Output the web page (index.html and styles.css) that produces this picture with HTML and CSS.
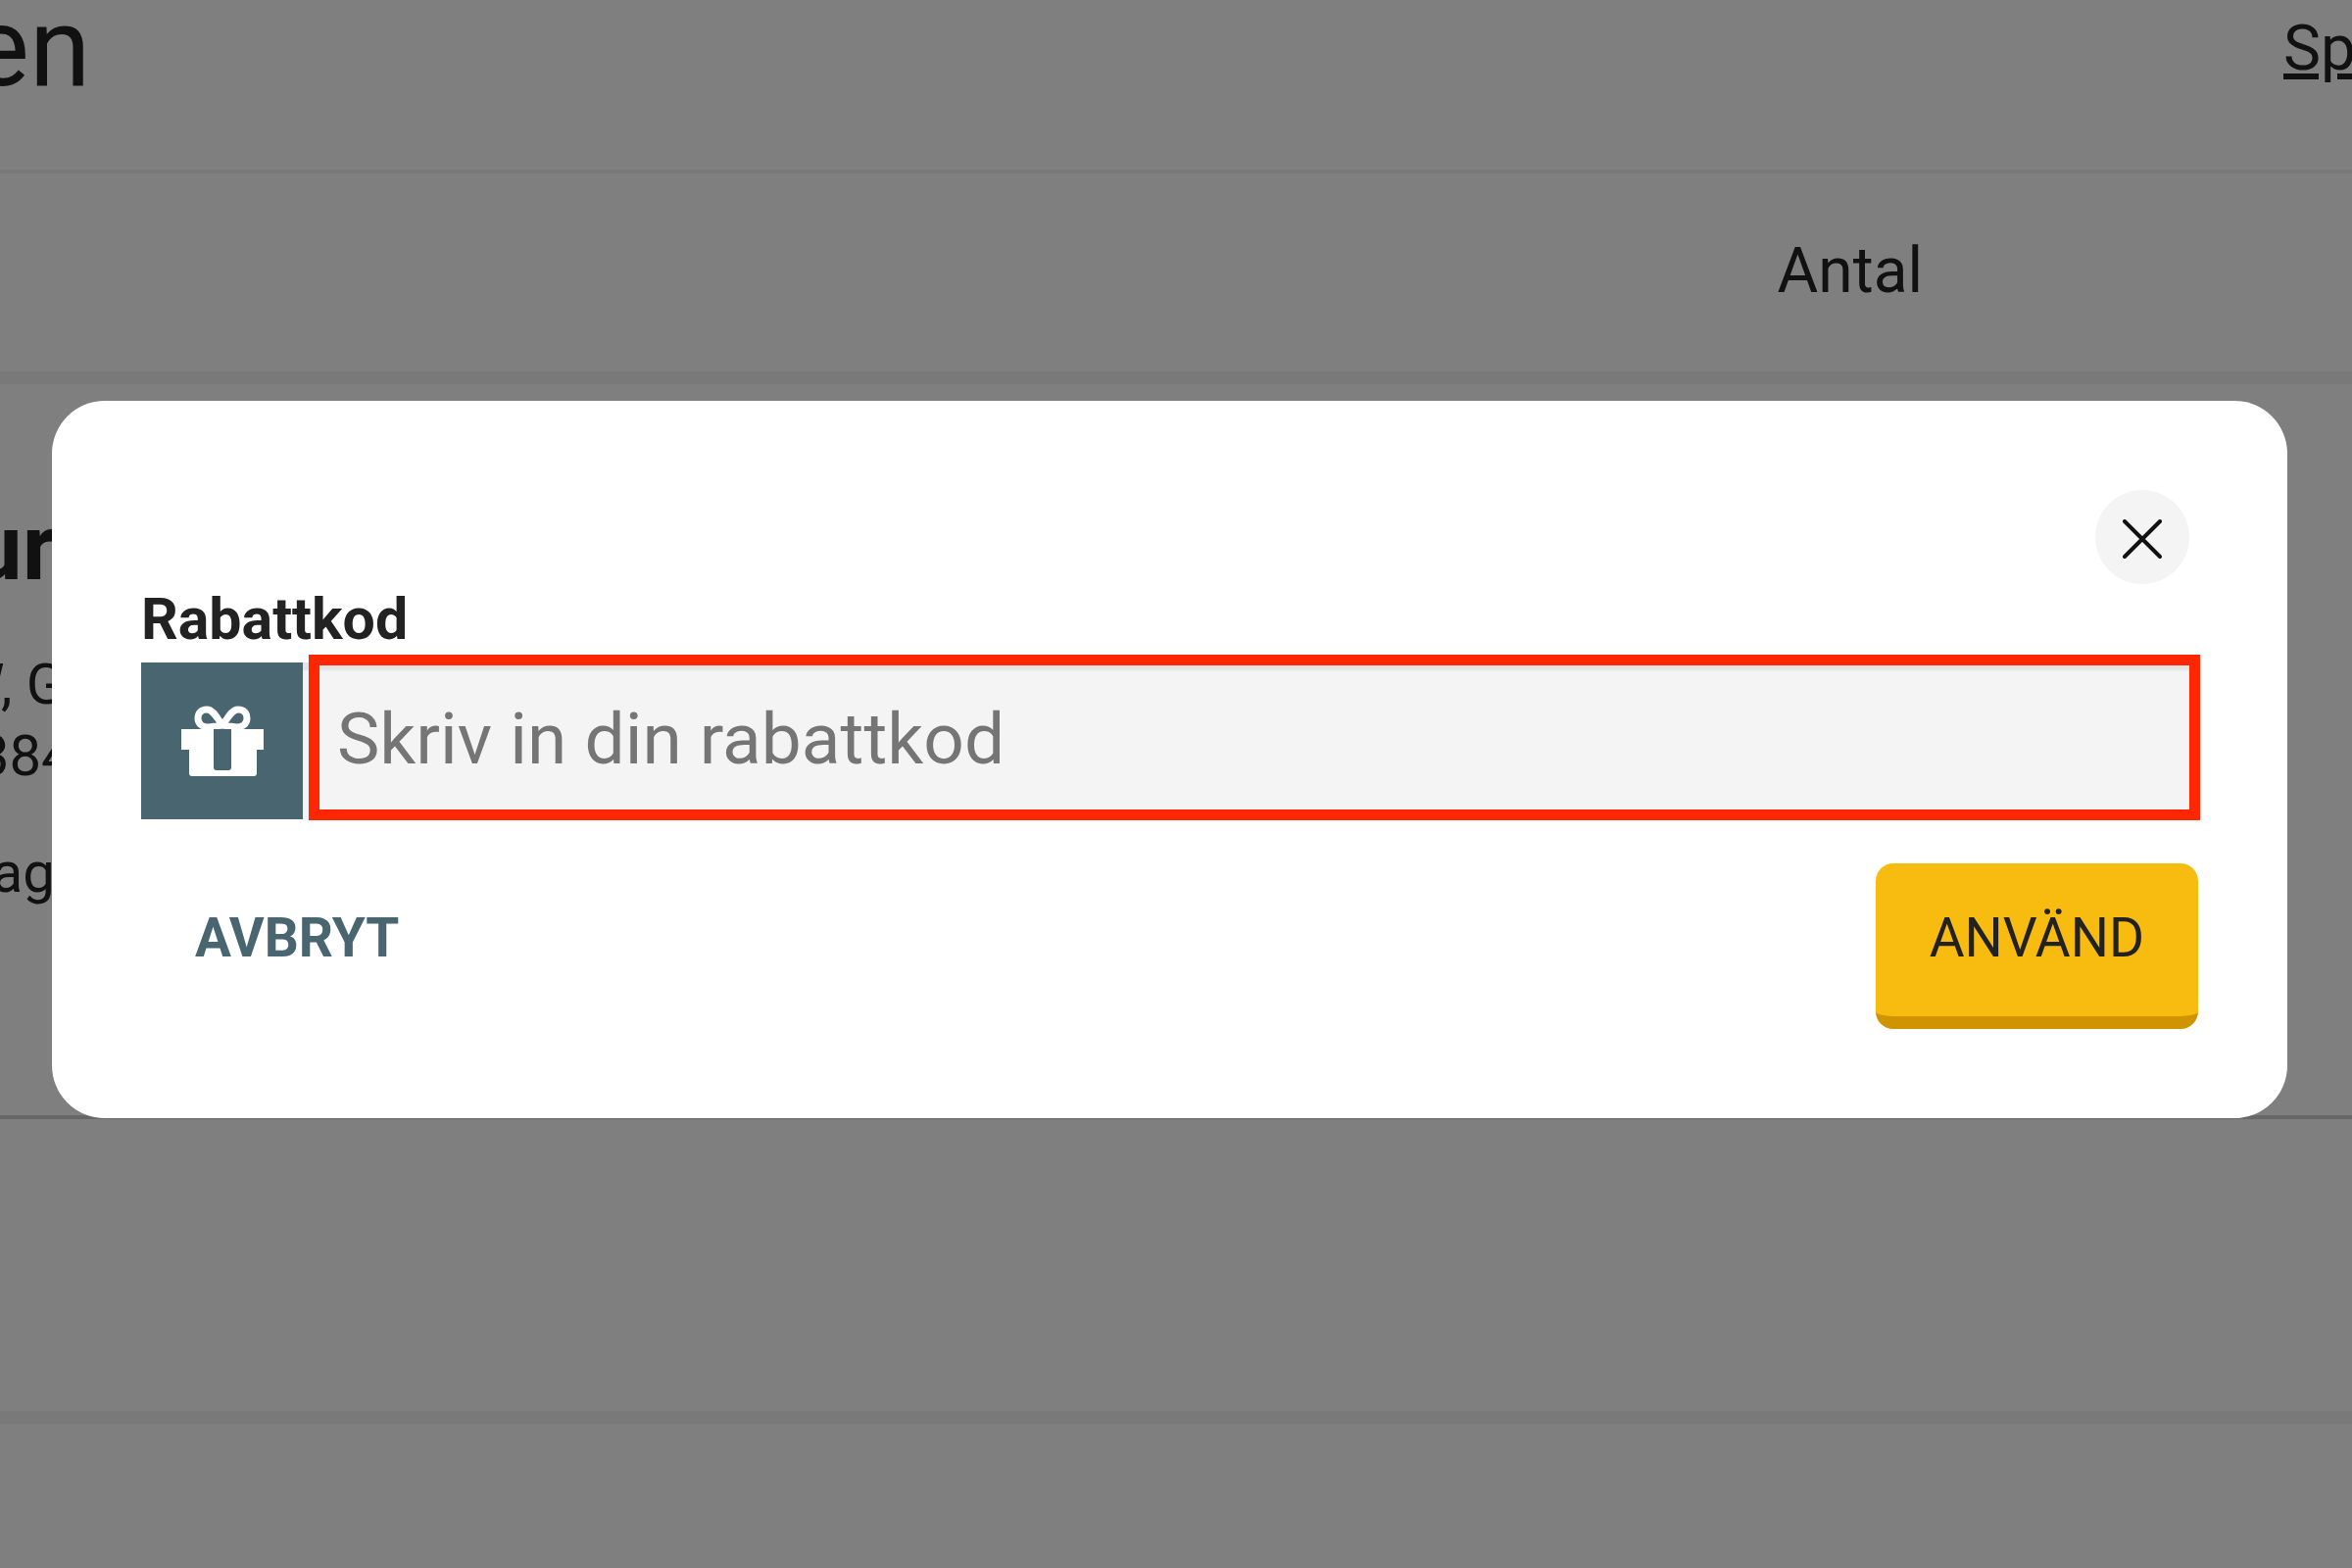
FILE: index.html
```html
<!DOCTYPE html>
<html lang="sv">
<head>
  <meta charset="UTF-8" />
  <meta name="viewport" content="width=device-width, initial-scale=1.0"/>
  <title>Varukorg - Rabattkod</title>
  <link rel="stylesheet" href="styles.css">
</head>
<body>
  <main class="cart">
    <header class="cart-header">
      <h1>en</h1>
      <a href="#">Sp</a>
    </header>

    <div class="cart-columns">
      <span>Antal</span>
    </div>

    <section class="cart-item">
      <h2>ur</h2>
      <p>W, G</p>
      <p>/384</p>
      <p class="stock">frag</p>
    </section>

    <section class="cart-summary"></section>
  </main>

  <div class="overlay">
    <form class="modal" role="dialog" aria-label="Rabattkod">
      <button type="button" class="close" aria-label="Stäng">
        <svg viewBox="0 0 40 40" width="40" height="40">
          <path d="M2 2 L38 38 M38 2 L2 38" fill="none" stroke="#111" stroke-width="4" stroke-linecap="round"/>
        </svg>
      </button>

      <label for="code">Rabattkod</label>
      <div class="code-row">
        <span class="gift">
          <svg viewBox="0 0 84 72" width="84" height="72">
            <path d="M42 20 C37 14 33 4 26 4 C20 4 17 8 17 13 C17 19 22 22 28 22 Z M42 20 C47 14 51 4 58 4 C64 4 67 8 67 13 C67 19 62 22 56 22 Z" fill="none" stroke="#fff" stroke-width="7" stroke-linejoin="round"/>
            <path d="M0 24 H84 V45 H77 V69 Q77 72 74 72 H11 Q8 72 8 69 V45 H0 Z" fill="#fff"/>
            <path d="M33 24 H51 V63 Q51 66 48 66 H36 Q33 66 33 63 Z" fill="#486570"/>
          </svg>
        </span>
        <div class="field">
          <input type="text" id="code" placeholder="Skriv in din rabattkod">
        </div>
      </div>

      <div class="actions">
        <button type="button" class="cancel">AVBRYT</button>
        <button type="submit" class="apply">ANVÄND</button>
      </div>
    </form>
  </div>
</body>
</html>
```

FILE: styles.css
```css
* {
  box-sizing: border-box;
  margin: 0;
  padding: 0;
}
body {
  font-family: Roboto, "Liberation Sans", sans-serif;
  font-size: 57px;
  color: #222;
  background-color: #fff;
  height: 100vh;
  overflow: hidden;
}
button,
input {
  font-family: inherit;
  border: none;
}

/* Cart page */
.cart-header {
  display: flex;
  justify-content: space-between;
  align-items: center;
  height: 177px;
  padding-bottom: 75px;
  border-bottom: 4px solid #f2f2f2;
}
.cart-header h1 {
  margin-left: -30px;
  font-size: 113px;
  font-weight: 400;
  line-height: 96px;
}
.cart-header a {
  flex: 0 0 70px;
  min-width: 0;
  font-size: 64px;
  color: inherit;
}
.cart-columns {
  display: flex;
  justify-content: flex-end;
  align-items: center;
  height: 215px;
  padding: 0 438px 4px 0;
  border-bottom: 13px solid #f2f2f2;
  font-size: 64px;
}
.cart-item {
  height: 750px;
  padding-top: 112px;
  border-bottom: 4px solid #cfcfcf;
}
.cart-item h2 {
  margin-left: -30px;
  font-size: 94px;
  line-height: 110px;
}
.cart-item p {
  margin-left: -47px;
  font-size: 58px;
  line-height: 73px;
}
.cart-item h2 + p {
  margin-top: 48px;
}
.cart-item .stock {
  margin-top: 46px;
}
.cart-summary {
  height: 311px;
  border-bottom: 13px solid #f2f2f2;
}

/* Discount code dialog */
.overlay {
  position: fixed;
  inset: 0;
  display: flex;
  align-items: center;
  padding: 0 66px 50px 53px;
  background-color: rgba(0, 0, 0, 0.5);
}
.modal {
  display: flex;
  flex-direction: column;
  width: 100%;
  padding: 91px;
  background-color: #fff;
  border-radius: 54px;
}
.close {
  display: flex;
  align-items: center;
  justify-content: center;
  align-self: flex-end;
  width: 96px;
  height: 96px;
  margin-right: 9px;
  padding-top: 4px;
  background-color: #f4f4f4;
  border-radius: 50%;
  cursor: pointer;
}
.modal label {
  font-size: 59px;
  font-weight: bold;
  line-height: 72px;
  margin-bottom: 8px;
}
.code-row {
  display: flex;
  height: 160px;
}
.gift {
  display: flex;
  align-items: center;
  justify-content: center;
  width: 165px;
  background-color: #486570;
}
.field {
  position: relative;
  flex: 1;
}
/* red frame round the text box */
.field::after {
  content: "";
  position: absolute;
  inset: -8px -2px -1px 6px;
  border: 11px solid #ff2600;
  pointer-events: none;
}
.field input {
  width: 100%;
  height: 100%;
  padding: 0 35px 4px;
  font-size: 73px;
  color: #222;
  background-color: #f4f4f4;
  box-shadow: inset 0 8px 2px #e4e4e4;
  outline: none;
}
.field input::placeholder {
  color: #757575;
}
.actions {
  display: flex;
  justify-content: space-between;
  margin-top: 45px;
}
.actions button {
  height: 169px;
  padding: 0 55px 18px;
  font-size: 55px;
  cursor: pointer;
}
.cancel {
  color: #486570;
  font-weight: bold;
  background: none;
}
.actions .apply {
  padding-bottom: 5px;
  color: #222;
  background-color: #f8bb10;
  border-bottom: 13px solid #d09400;
  border-radius: 18px;
}
```
